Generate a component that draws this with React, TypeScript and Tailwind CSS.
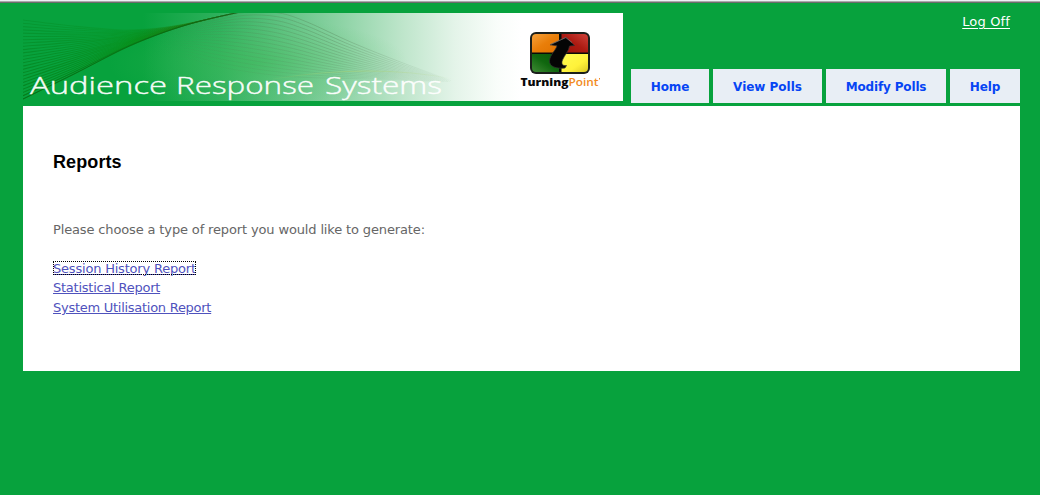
const LEFT_COUNT = 25;
const RIGHT_COUNT = 17;

type Curve = number[][];

const LEFT_STEEP: Curve = [[0, 86], [50, 61.5], [100, 36], [135, 21.5], [165, 11.5], [190, 5], [222, -2]];
const LEFT_SHALLOW: Curve = [[0, 7], [50, 13], [100, 17], [135, 15], [165, 10.5], [190, 5], [222, -2.5]];
const RIGHT_STEEP: Curve = [[150, 16], [190, 6], [225, -1], [256, 0], [284, 9], [330, 30], [380, 50], [430, 68]];
const RIGHT_SHALLOW: Curve = [[125, 36], [155, 42], [185, 51], [220, 58], [260, 63], [300, 65], [350, 66], [425, 69]];

function wavePath(from: Curve, to: Curve, t: number): string {
  const p = from.map(([x, y], i) => [x + (to[i][0] - x) * t, y + (to[i][1] - y) * t]);
  let d = `M${p[0][0]} ${p[0][1]}`;
  for (let i = 0; i < p.length - 1; i++) {
    const a = p[Math.max(0, i - 1)];
    const b = p[i];
    const c = p[i + 1];
    const e = p[Math.min(p.length - 1, i + 2)];
    d += ` C${b[0] + (c[0] - a[0]) / 6} ${b[1] + (c[1] - a[1]) / 6} ${c[0] - (e[0] - b[0]) / 6} ${c[1] - (e[1] - b[1]) / 6} ${c[0]} ${c[1]}`;
  }
  return d;
}

const TITLE = [
  { word: "Audience", x: 7, width: 137 },
  { word: "Response", x: 153, width: 138 },
  { word: "Systems", x: 302, width: 117 },
];

function Banner() {
  return (
    <svg width="600" height="88" viewBox="0 0 600 88" className="block shrink-0">
      <defs>
        <linearGradient id="fade" x1="0" x2="1" y1="0" y2="0">
          <stop offset="0" stopColor="#07a23d" />
          <stop offset=".2" stopColor="#07a23d" />
          <stop offset=".33" stopColor="#2fb15d" />
          <stop offset=".43" stopColor="#5fc282" />
          <stop offset=".53" stopColor="#8dd3a5" />
          <stop offset=".63" stopColor="#bde5ca" />
          <stop offset=".72" stopColor="#e4f4e9" />
          <stop offset=".79" stopColor="#f9fdfa" />
          <stop offset=".83" stopColor="#fff" />
        </linearGradient>
        <linearGradient id="left" gradientUnits="userSpaceOnUse" x1="0" x2="217" y1="0" y2="0">
          <stop offset="0" stopColor="#03801b" stopOpacity=".85" />
          <stop offset=".5" stopColor="#068a10" stopOpacity=".6" />
          <stop offset=".75" stopColor="#17780d" stopOpacity=".22" />
          <stop offset="1" stopColor="#2c6b22" stopOpacity=".04" />
        </linearGradient>
        <linearGradient id="right" gradientUnits="userSpaceOnUse" x1="130" x2="430" y1="0" y2="0">
          <stop offset="0" stopColor="#4b8750" stopOpacity="0" />
          <stop offset=".25" stopColor="#4b8750" stopOpacity=".32" />
          <stop offset=".6" stopColor="#5f9467" stopOpacity=".5" />
          <stop offset=".8" stopColor="#8aae90" stopOpacity=".35" />
          <stop offset="1" stopColor="#a5c9ac" stopOpacity="0" />
        </linearGradient>
        <linearGradient id="crest" gradientUnits="userSpaceOnUse" x1="240" x2="430" y1="0" y2="0">
          <stop offset="0" stopColor="#b1d36d" stopOpacity="0" />
          <stop offset=".5" stopColor="#b1d36d" stopOpacity=".45" />
          <stop offset="1" stopColor="#b1d36d" stopOpacity="0" />
        </linearGradient>
        <radialGradient id="glow" gradientUnits="userSpaceOnUse" cx="0" cy="0" r="1" gradientTransform="translate(235 50) scale(150 45)">
          <stop offset="0" stopColor="#3dbb55" stopOpacity=".45" />
          <stop offset="1" stopColor="#4cc062" stopOpacity="0" />
        </radialGradient>
        <linearGradient id="orange" x1="0" y1="0" x2="1" y2="1"><stop stopColor="#f5a13b" /><stop offset=".5" stopColor="#e97e09" /><stop offset="1" stopColor="#df7100" /></linearGradient>
        <linearGradient id="red" x1="1" y1="0" x2="0" y2="1"><stop stopColor="#d0433a" /><stop offset=".5" stopColor="#ac1b12" /><stop offset="1" stopColor="#9d1009" /></linearGradient>
        <linearGradient id="green" x1="0" y1="1" x2="1" y2="0"><stop stopColor="#408b35" /><stop offset=".5" stopColor="#10670f" /><stop offset="1" stopColor="#075909" /></linearGradient>
        <linearGradient id="yellow" x1="0" y1="0" x2="1" y2="1"><stop stopColor="#fffb50" /><stop offset=".6" stopColor="#fff23a" /><stop offset="1" stopColor="#d9c725" /></linearGradient>
        <clipPath id="badge"><rect x="509" y="21" width="56" height="38" rx="4" /></clipPath>
      </defs>
      <rect width="600" height="88" fill="url(#fade)" />
      <rect width="420" height="88" fill="url(#glow)" />
      {Array.from({ length: LEFT_COUNT }, (_, i) => (
        <path key={i} d={wavePath(LEFT_STEEP, LEFT_SHALLOW, i / (LEFT_COUNT - 1))} fill="none" stroke="url(#left)" strokeWidth="1.1" strokeOpacity={1 - (i / LEFT_COUNT) * 0.65} />
      ))}
      {Array.from({ length: RIGHT_COUNT }, (_, i) => (
        <path key={i} d={wavePath(RIGHT_STEEP, RIGHT_SHALLOW, i / (RIGHT_COUNT - 1))} fill="none" stroke="url(#right)" strokeWidth="1" strokeOpacity={1 - (i / RIGHT_COUNT) * 0.7} />
      ))}
      <path d={wavePath(LEFT_STEEP, LEFT_SHALLOW, 0)} fill="none" stroke="#0a5c10" strokeOpacity=".65" strokeWidth=".9" />
      <path d={wavePath(LEFT_STEEP, LEFT_SHALLOW, 0.04)} fill="none" stroke="#0a6410" strokeOpacity=".4" strokeWidth=".8" />
      <path d="M250 66 Q350 50 430 66" fill="none" stroke="url(#crest)" />
      {TITLE.map(({ word, x, width }) => (
        <text key={word} x={x} y="81" textLength={width} lengthAdjust="spacingAndGlyphs" fill="#fff" fillOpacity=".95" stroke="#fff" strokeOpacity=".8" strokeWidth=".5" className="font-['Open_Sans',sans-serif] text-[24px] font-light">{word}</text>
      ))}
      <rect x="507" y="19" width="60" height="42" rx="6" fill="#1b1f1b" />
      <g clipPath="url(#badge)">
        <rect x="509" y="21" width="56" height="38" fill="#080b08" />
        <path d="M509 21h27v18.5h-27z" fill="url(#orange)" />
        <path d="M538.5 21h27v18.5h-27z" fill="url(#red)" />
        <path d="M509 41h27v18.5h-27z" fill="url(#green)" />
        <path d="M538.5 41h27v18.5h-27z" fill="url(#yellow)" />
      </g>
      <path d="M543 24.5 L551.5 32.5 L546.5 33 C546 38 541.5 42 539.5 47 C538 51 539.5 53 543.5 52.5 L542 55 C533 56 526 53.5 526.5 47.5 C527 42 533 37 534 32.8 L527 31.8 Z" fill="#050505" stroke="#333" strokeWidth=".7" />
      <path d="M527.5 31.5 L542.8 24.5 L549 29.5" fill="none" stroke="#999" strokeWidth=".5" />
      <text x="497.5" y="72.5" textLength="48" lengthAdjust="spacingAndGlyphs" fill="#080808" className="font-['Open_Sans',sans-serif] text-[10px] font-extrabold">Turning</text>
      <text x="545.5" y="72.5" textLength="30" lengthAdjust="spacingAndGlyphs" fill="#f28b1d" className="font-['Open_Sans',sans-serif] text-[10px] font-semibold">Point</text>
      <path d="M576.5 65v1.5" stroke="#f28b1d" />
    </svg>
  );
}

const tab = "flex h-[34px] items-center justify-center bg-[#e8eef5] pt-px text-[12px] font-bold text-[#0645f4] whitespace-nowrap";

export default function App() {
  return (
    <div className="h-[495px] w-[1040px] overflow-hidden bg-[#07a23d] font-['Verdana','DejaVu_Sans',sans-serif] text-[13px]">
      <div className="h-px bg-[#edf0f5]" />
      <div className="h-px bg-[#a9a9a9]" />
      <div className="h-px bg-[#6c6c6c]" />
      <header className="flex h-[103px] pt-[10px] pl-[23px]">
        <Banner />
        <div className="flex w-[397px] flex-col items-end">
          <a href="#logoff" className="mr-[10px] h-[56px] text-[13px] leading-[17px] tracking-[0.15px] text-white underline underline-offset-2">Log Off</a>
          <nav className="flex gap-1">
            <a href="#home" className={`${tab} w-[78px] tracking-[-0.1px]`}>Home</a>
            <a href="#view" className={`${tab} w-[109px] tracking-[-0.02px]`}>View Polls</a>
            <a href="#modify" className={`${tab} w-[120px] tracking-[-0.15px]`}>Modify Polls</a>
            <a href="#help" className={`${tab} w-[70px] tracking-[-0.1px]`}>Help</a>
          </nav>
        </div>
      </header>
      <main className="ml-[23px] h-[265px] w-[997px] bg-white px-[30px] pt-[45px]">
        <h1 className="font-['Liberation_Sans',sans-serif] text-[18px] leading-[22px] font-bold tracking-[0.1px] text-black">Reports</h1>
        <p className="mt-[48px] leading-[18px] tracking-[-0.14px] text-[#666]">Please choose a type of report you would like to generate:</p>
        <div className="mt-[22px] flex flex-col items-start text-[#4f52bd]">
          <a href="#session" className="mb-[5px] h-[14px] leading-[15px] tracking-[-0.2px] underline underline-offset-1 outline-1 -outline-offset-1 outline-dotted outline-black">Session History Report</a>
          <a href="#statistical" className="h-[20px] leading-[15px] tracking-[-0.24px] underline underline-offset-1">Statistical Report</a>
          <a href="#system" className="leading-[15px] tracking-[-0.27px] underline underline-offset-1">System Utilisation Report</a>
        </div>
      </main>
    </div>
  );
}
